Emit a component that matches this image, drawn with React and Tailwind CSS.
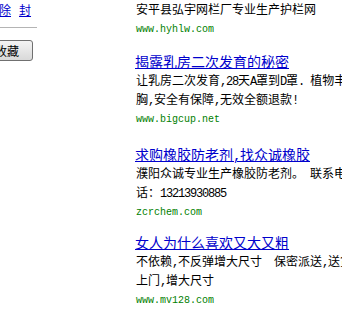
const isCJK = (ch) => /[\u3000-\u9fff\uff00-\uffef]/.test(ch);

function Mixed({ text, big }) {
  const runs = [];
  for (const ch of text) {
    const c = isCJK(ch);
    if (runs.length && runs[runs.length - 1].c === c) runs[runs.length - 1].t += ch;
    else runs.push({ c, t: ch });
  }
  return (
    <>
      {runs.map((r, i) =>
        r.c ? (
          <span key={i}>{r.t}</span>
        ) : (
          <span
            key={i}
            className={
              big
                ? "whitespace-pre leading-none text-[14px] tracking-[-1.4px]"
                : "whitespace-pre leading-none text-[12px] tracking-[-1.2px]"
            }
            style={{ fontFamily: '"Liberation Mono", monospace' }}
          >
            {r.t}
          </span>
        )
      )}
    </>
  );
}

export default function App() {
  const cjk = { fontFamily: '"Noto Sans CJK SC", sans-serif' };
  const mono = { fontFamily: '"Liberation Mono", monospace' };
  const blocks = [
    {
      title: "揭露乳房二次发育的秘密",
      lines: ["让乳房二次发育,28天A罩到D罩. 植物丰胸", "胸,安全有保障,无效全额退款!"],
      url: "www.bigcup.net",
      mt: "mt-[12px]",
    },
    {
      title: "求购橡胶防老剂,找众诚橡胶",
      lines: ["濮阳众诚专业生产橡胶防老剂。 联系电", "话：13213930885"],
      url: "zcrchem.com",
      mt: "mt-[15px]",
    },
    {
      title: "女人为什么喜欢又大又粗",
      lines: ["不依赖,不反弹增大尺寸  保密派送,送货", "上门,增大尺寸"],
      url: "www.mv128.com",
      mt: "mt-[10px]",
    },
  ];
  return (
    <div className="w-[342px] h-[310px] overflow-hidden bg-white flex" style={cjk}>
      <div className="w-[136px] shrink-0 flex flex-col">
        <div className="flex text-[12px] leading-[14px] mt-[3px] -ml-[1px] text-[#0000cc]">
          <span className="underline">除</span>
          <span className="underline ml-[8px]">封</span>
        </div>
        <div className="w-[37px] h-px bg-[#b4b4b4] mt-[10px]"></div>
        <div className="mt-[12px] -ml-[12px] w-[45px] h-[21px] border border-[#707070] rounded-[3px] bg-gradient-to-b from-[#f4f4f4] to-[#d9d9d9] text-[12px] leading-[19px] text-black pl-[6px]">
          收藏
        </div>
      </div>
      <div className="flex-1 min-w-0 text-black whitespace-nowrap">
        <div className="text-[12px] leading-[18px]">安平县弘宇网栏厂专业生产护栏网</div>
        <div className="text-[10px] leading-[20px] mt-[2px] text-[#008000]" style={mono}>www.hyhlw.com</div>
        {blocks.map((b, i) => (
          <div key={i} className={b.mt}>
            <div className="text-[14px] leading-[18px] text-[#0000cc] underline -ml-px">
              <Mixed text={b.title} big />
            </div>
            {b.lines.map((l, j) => (
              <div key={j} className="text-[12px] leading-[19px]">
                <Mixed text={l} />
              </div>
            ))}
            <div className="text-[10px] leading-[20px] mt-[2px] text-[#008000]" style={mono}>{b.url}</div>
          </div>
        ))}
      </div>
    </div>
  );
}
